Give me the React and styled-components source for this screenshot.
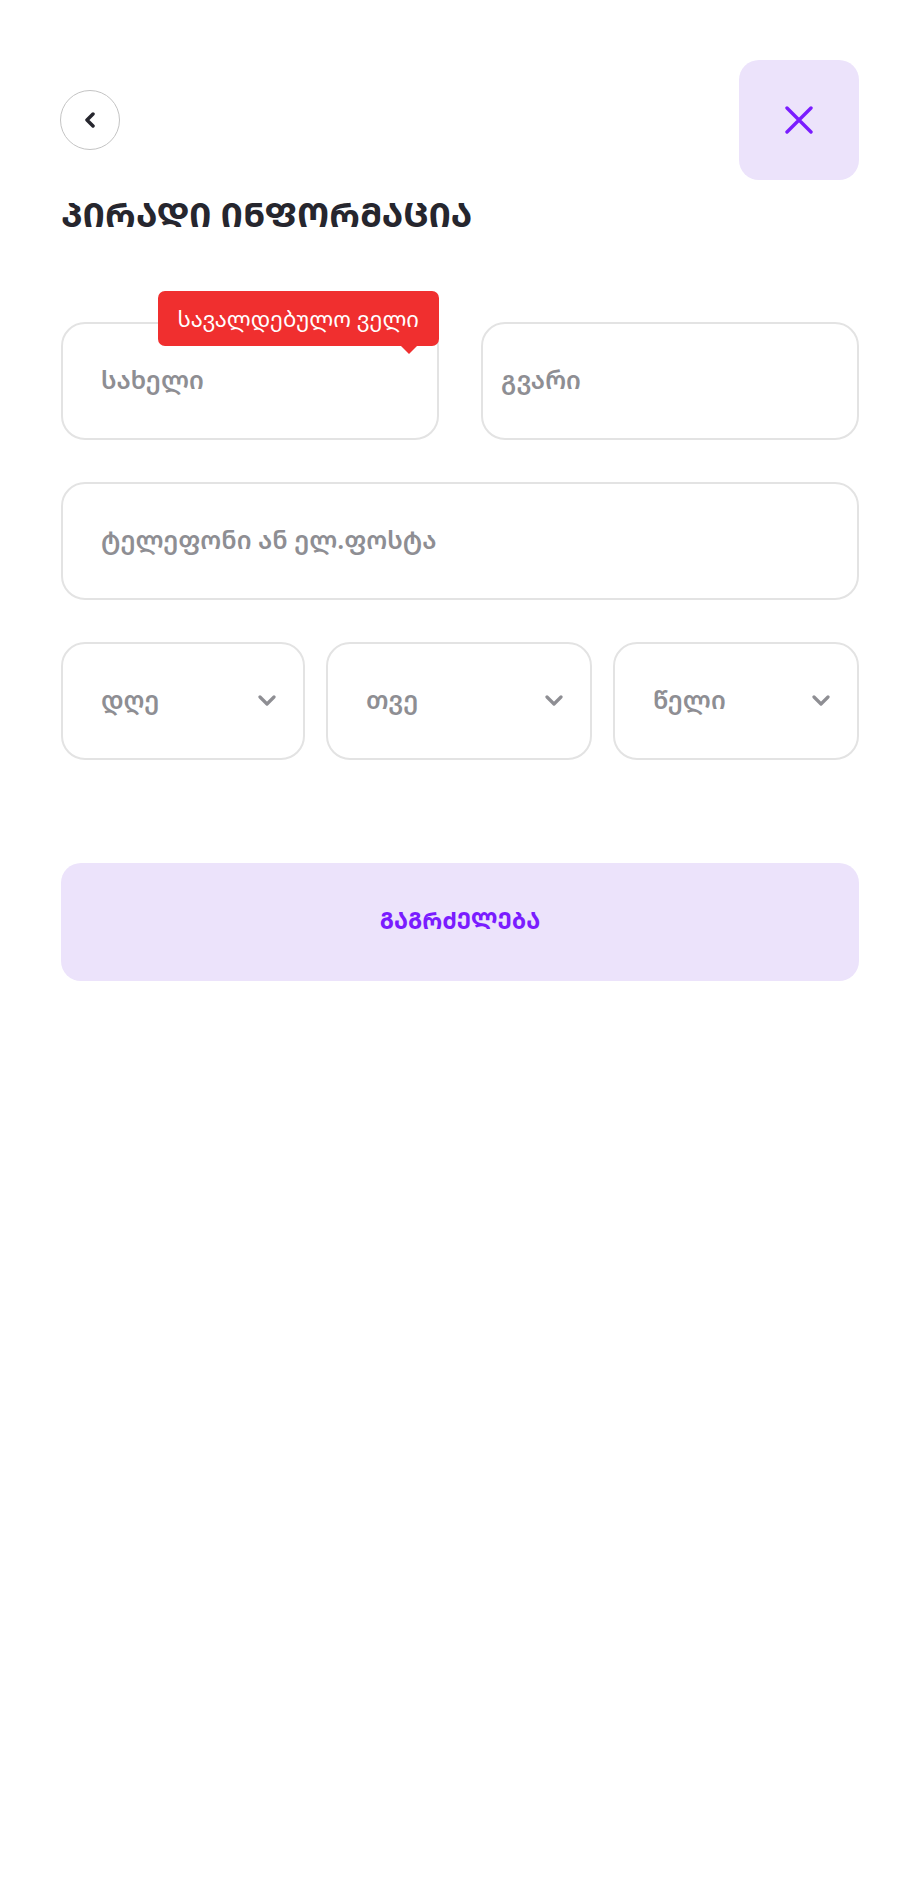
import React from 'react';
import styled, { createGlobalStyle } from 'styled-components';

const GlobalStyle = createGlobalStyle`
	html, body {
		margin: 0;
		padding: 0;
		background: #fff;
	}
	body {
		font-family: "Noto Sans Georgian", "Noto Sans", sans-serif;
	}
	* {
		box-sizing: border-box;
	}
`;

// mtavruli (caps) forms for headings
const TITLE = '\u1C9E\u1C98\u1CA0\u1C90\u1C93\u1C98 \u1C98\u1C9C\u1CA4\u1C9D\u1CA0\u1C9B\u1C90\u1CAA\u1C98\u1C90';
const CONTINUE = '\u1C92\u1C90\u1C92\u1CA0\u1CAB\u1C94\u1C9A\u1C94\u1C91\u1C90';

const Page = styled.div`
	width: 920px;
	min-height: 1904px;
	padding: 60px 61px 0;
	background: #fff;
`;

const Header = styled.div`
	display: flex;
	align-items: center;
	justify-content: space-between;
	height: 120px;
`;

const BackButton = styled.button`
	width: 60px;
	height: 60px;
	border-radius: 50%;
	border: 1.5px solid #c4c4c4;
	background: #fff;
	display: flex;
	align-items: center;
	justify-content: center;
	padding: 0;
	margin-left: -1px;
`;

const CloseButton = styled.button`
	width: 120px;
	height: 120px;
	border-radius: 20px;
	border: none;
	background: #ece3fb;
	display: flex;
	align-items: center;
	justify-content: center;
	padding: 0;
`;

const Title = styled.h1`
	margin: 14px 0 0;
	font-size: 34.5px;
	line-height: 40px;
	font-weight: 700;
	color: #26262e;
`;

const Form = styled.div`
	display: flex;
	flex-direction: column;
	gap: 42px;
	margin-top: 88px;
`;

const Row = styled.div`
	display: grid;
	grid-template-columns: ${(p) => p.$cols};
	gap: ${(p) => p.$gap || '42px'};
`;

const FieldWrap = styled.div`
	position: relative;
`;

const Field = styled.div`
	height: 118px;
	border: 2px solid #e3e3e3;
	border-radius: 24px;
	display: flex;
	align-items: center;
	justify-content: space-between;
	padding: 0 26px 4px ${(p) => p.$pad || '38px'};
	font-size: 25px;
	font-weight: 600;
	color: #8e8e93;

	& svg {
		margin-top: 4px;
	}
`;

const Tooltip = styled.div`
	position: absolute;
	top: -31px;
	right: 0;
	height: 55px;
	padding: 0 20px;
	background: #f02f2f;
	border-radius: 7px;
	color: #fff;
	font-size: 22px;
	display: flex;
	align-items: center;

	&::after {
		content: '';
		position: absolute;
		right: 22px;
		bottom: -8px;
		border-left: 8px solid transparent;
		border-right: 8px solid transparent;
		border-top: 8px solid #f02f2f;
	}
`;

const ContinueButton = styled.button`
	margin-top: 103px;
	width: 100%;
	height: 118px;
	border: none;
	border-radius: 20px;
	background: #ece3fb;
	color: #7a1cff;
	font-family: "Noto Sans Georgian", "Noto Sans", sans-serif;
	font-size: 22.5px;
	font-weight: 700;
	padding-bottom: 4px;
`;

const Chevron = () => (
	<svg width="20" height="12" viewBox="0 0 20 12" fill="none">
		<polyline points="3,2 10,9 17,2" stroke="#8e8e93" strokeWidth="3.2" strokeLinecap="round" strokeLinejoin="round" />
	</svg>
);

const Select = ({ label }) => (
	<Field>
		<span>{label}</span>
		<Chevron />
	</Field>
);

export default function App() {
	return (
		<>
			<GlobalStyle />
			<Page>
				<Header>
					<BackButton>
						<svg width="14" height="16" viewBox="0 0 14 16" fill="none">
							<polyline points="10,2 4,8 10,14" stroke="#26262e" strokeWidth="3.5" strokeLinecap="round" strokeLinejoin="round" />
						</svg>
					</BackButton>
					<CloseButton>
						<svg width="28" height="28" viewBox="0 0 28 28" fill="none">
							<path d="M2 2 L26 26 M26 2 L2 26" stroke="#7a1cff" strokeWidth="3.4" strokeLinecap="round" />
						</svg>
					</CloseButton>
				</Header>
				<Title>{TITLE}</Title>
				<Form>
					<Row $cols="1fr 1fr">
						<FieldWrap>
							<Tooltip>სავალდებულო ველი</Tooltip>
							<Field>სახელი</Field>
						</FieldWrap>
						<Field $pad="18px">გვარი</Field>
					</Row>
					<Field>ტელეფონი ან ელ.ფოსტა</Field>
					<Row $cols="244px 266px 1fr" $gap="21px">
						<Select label="დღე" />
						<Select label="თვე" />
						<Select label="წელი" />
					</Row>
				</Form>
				<ContinueButton>{CONTINUE}</ContinueButton>
			</Page>
		</>
	);
}
